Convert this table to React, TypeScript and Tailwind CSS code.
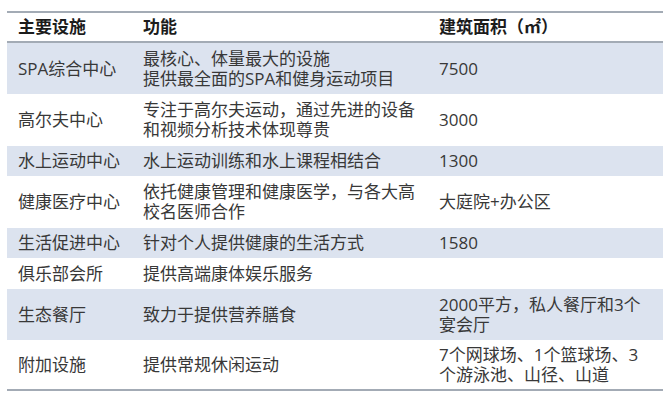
const rows = [
  { name: "SPA综合中心", func: ["最核心、体量最大的设施", "提供最全面的SPA和健身运动项目"], area: ["7500"], h: "h-[51px]" },
  { name: "高尔夫中心", func: ["专注于高尔夫运动，通过先进的设备", "和视频分析技术体现尊贵"], area: ["3000"], h: "h-[52px]" },
  { name: "水上运动中心", func: ["水上运动训练和水上课程相结合"], area: ["1300"], h: "h-[30px]" },
  { name: "健康医疗中心", func: ["依托健康管理和健康医学，与各大高", "校名医师合作"], area: ["大庭院+办公区"], h: "h-[52px]" },
  { name: "生活促进中心", func: ["针对个人提供健康的生活方式"], area: ["1580"], h: "h-[30px]" },
  { name: "俱乐部会所", func: ["提供高端康体娱乐服务"], area: [], h: "h-[31px]" },
  { name: "生态餐厅", func: ["致力于提供营养膳食"], area: ["2000平方，私人餐厅和3个", "宴会厅"], h: "h-[51px]" },
  { name: "附加设施", func: ["提供常规休闲运动"], area: ["7个网球场、1个篮球场、3", "个游泳池、山径、山道"], h: "h-[49px]" },
];

export default function App() {
  return (
    <div
      className="w-[670px] h-[400px] bg-white pt-[11px] pl-[7px] text-[17px] leading-[20px] text-[#383838]"
      style={{ fontFamily: '"Open Sans", "Noto Sans CJK SC", sans-serif' }}
    >
      <div className="w-[656px] border-t-2 border-b-2 border-[#a3abb5]">
        <div className="grid grid-cols-[126px_296px_1fr] h-[30px] items-center border-b-2 border-[#a3abb5] font-bold text-[#1c1c1c]">
          <div className="pl-[11px]">主要设施</div>
          <div className="pl-[10px]">功能</div>
          <div className="pl-[10px]">建筑面积（㎡）</div>
        </div>
        {rows.map((r, i) => (
          <div
            key={i}
            className={`grid grid-cols-[126px_296px_1fr] items-center ${r.h} ${i % 2 === 0 ? "bg-[#dce3ef]" : "bg-white"}`}
          >
            <div className="pl-[11px] whitespace-nowrap">{r.name}</div>
            <div className="pl-[10px] whitespace-nowrap">
              {r.func.map((l, j) => (
                <div key={j}>{l}</div>
              ))}
            </div>
            <div className="pl-[10px] whitespace-nowrap">
              {r.area.map((l, j) => (
                <div key={j}>{l}</div>
              ))}
            </div>
          </div>
        ))}
      </div>
    </div>
  );
}
